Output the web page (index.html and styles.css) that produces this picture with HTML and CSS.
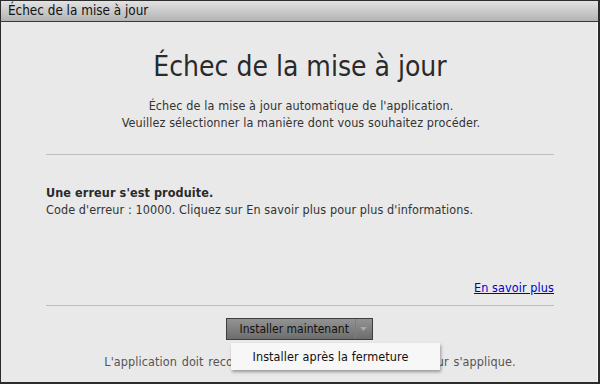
FILE: index.html
```html
<!DOCTYPE html>
<html lang="fr">
<head>
<meta charset="utf-8">
<link rel="stylesheet" href="styles.css">
</head>
<body>
<div class="window">
  <div class="titlebar">Échec de la mise à jour</div>
  <div class="content">
    <h1 class="heading">Échec de la mise à jour</h1>
    <p class="subtitle">Échec de la mise à jour automatique de l'application.<br>Veuillez sélectionner la manière dont vous souhaitez procéder.</p>
    <hr class="sep sep1">
    <div class="error">
      <div class="error-title">Une erreur s'est produite.</div>
      <div class="error-text">Code d'erreur : 10000. Cliquez sur En savoir plus pour plus d'informations.</div>
    </div>
    <div class="link-row"><a class="link" href="#">En savoir plus</a></div>
    <hr class="sep sep2">
    <div class="actions">
      <div class="split">
        <span class="split-main">Installer maintenant</span>
        <span class="split-arrow"><svg width="7" height="4" viewBox="0 0 7 4"><path d="M0 0h7L3.5 4z" fill="#a9a9a9"/></svg></span>
        <div class="menu"><div class="menu-item">Installer après la fermeture</div></div>
      </div>
    </div>
    <p class="footer">L'application doit recommencer pour que cette mise à jour s'applique.</p>
  </div>
</div>
</body>
</html>
```
FILE: styles.css
```css
html, body { margin: 0; padding: 0; }
body { width: 600px; height: 384px; overflow: hidden; font-family: "DejaVu Sans Condensed", "DejaVu Sans", sans-serif; color: #333; }
.window { box-sizing: border-box; width: 600px; height: 384px; border: 1px solid #2b2b2b; border-right-width: 2px; border-bottom-width: 2px; display: flex; flex-direction: column; background: #e9e9e9; }
.titlebar { height: 20px; line-height: 20px; padding-left: 7px; font-size: 13.4px; color: #111; background: linear-gradient(#e2e2e2, #b3b3b3); border-bottom: 1px solid #3a3a3a; }
.content { flex: 1; display: flex; flex-direction: column; padding: 0 43px 0 45px; border-right: 1px solid #f6f6f6; }
.heading { margin: 27px 0 0; font-size: 28px; line-height: 36px; font-weight: normal; text-align: center; color: #2a2a2a; }
.subtitle { margin: 12px 0 0; font-size: 12.5px; letter-spacing: 0.1px; line-height: 17px; text-align: center; color: #333; padding-left: 2px; }
.sep { margin: 0; border: 0; border-top: 1px solid #bdbdbd; }
.sep1 { margin-top: 23px; }
.error { margin-top: 29px; font-size: 12.5px; letter-spacing: 0.1px; line-height: 17px; }
.error-title { font-weight: bold; color: #2a2a2a; }
.link-row { margin-top: 61px; text-align: right; font-size: 12.5px; letter-spacing: 0.1px; line-height: 17px; }
.link { color: #0000cc; text-decoration: underline; }
.sep2 { margin-top: 9px; }
.actions { display: flex; justify-content: center; margin-top: 12px; }
.split { position: relative; display: flex; box-sizing: border-box; width: 147px; height: 22px; border: 1px solid #3d3d3d; background: linear-gradient(#939393, #6d6d6d); font-size: 12px; line-height: 20px; color: #111; margin-left: -2px; }
.split-main { padding: 0 6px 0 13px; border-right: 1px solid #7e7e7e; white-space: nowrap; }
.split-arrow { flex: 1; display: flex; align-items: center; justify-content: center; }
.menu { position: absolute; left: 4px; top: 24px; width: 209px; height: 27px; background: #f7f7f7; box-shadow: 1px 2px 3px rgba(0,0,0,0.35); }
.menu-item { padding-left: 22px; line-height: 27px; font-size: 12.5px; letter-spacing: 0.1px; color: #111; white-space: nowrap; }
.footer { margin: 13px 0 0; font-size: 12.5px; letter-spacing: 0.1px; word-spacing: 1px; line-height: 17px; text-align: center; color: #555; padding-left: 20px; }
```
